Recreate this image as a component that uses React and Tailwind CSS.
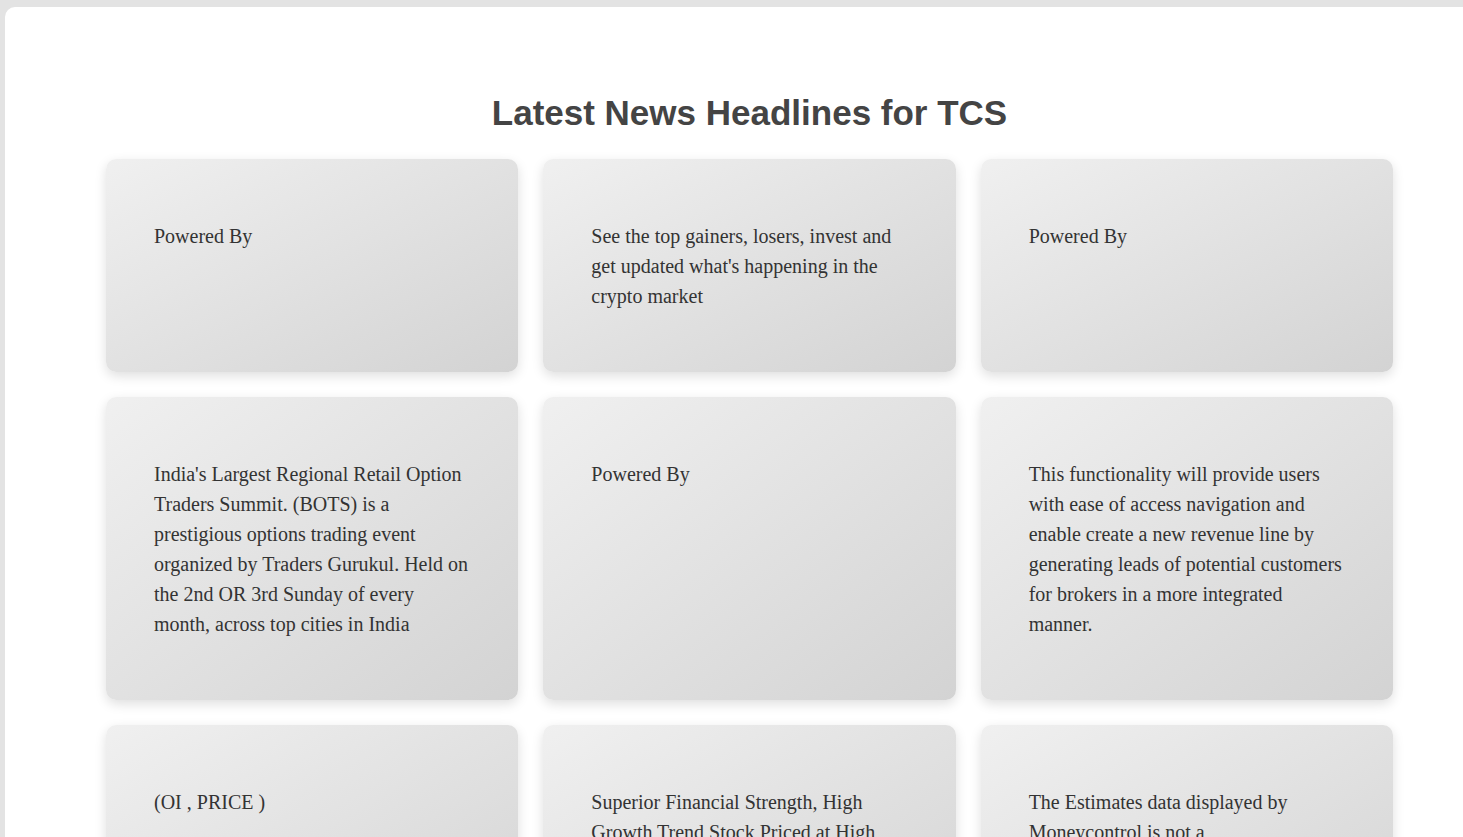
import React from "react";

const cards = [
  "Powered By",
  "See the top gainers, losers, invest and get updated what's happening in the crypto market",
  "Powered By",
  "India's Largest Regional Retail Option Traders Summit. (BOTS) is a prestigious options trading event organized by Traders Gurukul. Held on the 2nd OR 3rd Sunday of every month, across top cities in India",
  "Powered By",
  "This functionality will provide users with ease of access navigation and enable create a new revenue line by generating leads of potential customers for brokers in a more integrated manner.",
  "(OI , PRICE )",
  "Superior Financial Strength, High Growth Trend Stock Priced at High Valuation",
  "The Estimates data displayed by Moneycontrol is not a recommendation to buy or sell any securities.",
];

export default function App() {
  return (
    <div className="w-screen h-screen overflow-hidden bg-[#e3e3e3]">
      <div className="ml-[5px] mt-[7px] w-[1489px] min-h-[900px] rounded-tl-[10px] bg-white pt-[86px]">
        <h1
          className="text-center text-[35px] leading-[40px] font-bold text-[#444444] mb-[26px]"
          style={{ fontFamily: '"Liberation Sans", Arial, sans-serif' }}
        >
          Latest News Headlines for TCS
        </h1>
        <div className="mx-auto w-[1287px] grid grid-cols-3 gap-[25px]">
          {cards.map((t, i) => (
            <div
              key={i}
              className="rounded-[10px] bg-linear-to-br from-[#f0f0f0] to-[#d3d3d3] shadow-[0_4px_12px_rgba(0,0,0,0.13)] pl-[48px] pr-[50px] pt-[62px] pb-[61px]"
            >
              <p
                className="text-[20px] leading-[30px] text-[#333333]"
                style={{ fontFamily: '"Liberation Serif", "Times New Roman", serif' }}
              >
                {t}
              </p>
            </div>
          ))}
        </div>
      </div>
    </div>
  );
}
